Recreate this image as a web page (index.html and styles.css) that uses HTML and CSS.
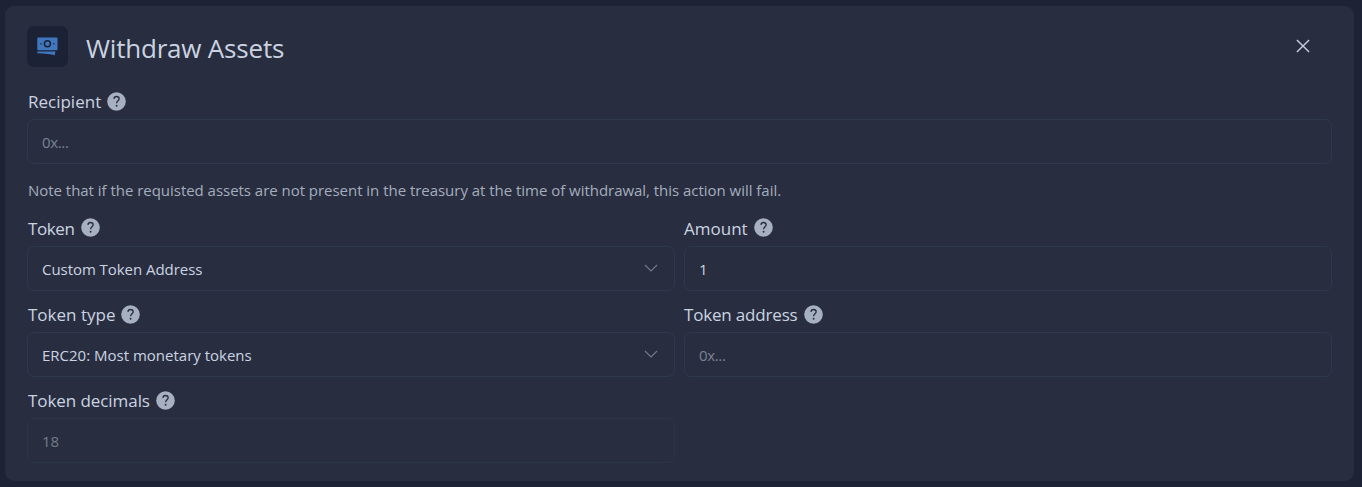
FILE: index.html
```html
<!DOCTYPE html>
<html lang="en">
<head>
<meta charset="utf-8">
<title>Withdraw Assets</title>
<link rel="stylesheet" href="styles.css">
</head>
<body>
<svg width="0" height="0" class="defs">
  <symbol id="help" viewBox="0 0 20 20"><circle cx="10" cy="10" r="9.8" fill="#a7b0c0"/><path d="M7.3 7.2C7.4 5.5 8.5 4.7 10 4.7c1.7 0 2.8 1 2.8 2.4 0 2-2.7 2.3-2.7 4.8" fill="none" stroke="#282e40" stroke-width="1.4"/><circle cx="10.1" cy="14.4" r="1" fill="#282e40"/></symbol>
  <symbol id="chevron" viewBox="0 0 14 8"><path d="M1 1l6 6 6-6" fill="none" stroke="#737a8b" stroke-width="1.1"/></symbol>
</svg>
<main class="card">
  <header class="header">
    <div class="badge">
      <svg width="21" height="19" viewBox="0 0 21 19"><rect x=".3" y=".4" width="20.2" height="12.8" rx="1" fill="#4077bf"/><circle cx="10.4" cy="6.8" r="3" fill="none" stroke="#1c2235" stroke-width="1.5"/><circle cx="4" cy="6.8" r=".8" fill="#1c2235"/><circle cx="16.8" cy="6.8" r=".8" fill="#1c2235"/><path d="M.3 14.5h18.1L17.8 18.2Q12 16.6.3 16.2z" fill="#4077bf"/></svg>
    </div>
    <h1 class="title">Withdraw Assets</h1>
    <button class="close" aria-label="Close"><svg width="14" height="14" viewBox="0 0 14 14"><path d="M.9.9l12.2 12.2M13.1.9L.9 13.1" stroke="#c6cfdd" stroke-width="1.4"/></svg></button>
  </header>
  <div class="label"><span>Recipient</span><svg class="help"><use href="#help"/></svg></div>
  <div class="field muted"><span class="hex">0x...</span></div>
  <p class="note">Note that if the requisted assets are not present in the treasury at the time of withdrawal, this action will fail.</p>
  <div class="grid">
    <section>
      <div class="label raised"><span class="token">Token</span><svg class="help"><use href="#help"/></svg></div>
      <div class="field"><span class="custom">Custom Token Address</span><svg class="chevron"><use href="#chevron"/></svg></div>
    </section>
    <section>
      <div class="label raised"><span>Amount</span><svg class="help"><use href="#help"/></svg></div>
      <div class="field"><span>1</span></div>
    </section>
    <section>
      <div class="label"><span>Token type</span><svg class="help"><use href="#help"/></svg></div>
      <div class="field"><span>ERC20: Most monetary tokens</span><svg class="chevron"><use href="#chevron"/></svg></div>
    </section>
    <section>
      <div class="label"><span class="address">Token address</span><svg class="help"><use href="#help"/></svg></div>
      <div class="field muted"><span class="hex">0x...</span></div>
    </section>
    <section>
      <div class="label"><span class="decimals">Token decimals</span><svg class="help"><use href="#help"/></svg></div>
      <div class="field muted disabled"><span>18</span></div>
    </section>
  </div>
</main>
</body>
</html>
```
FILE: styles.css
```css
* { box-sizing: border-box; }
body {
  margin: 0;
  height: 487px;
  overflow: hidden;
  padding: 6px 8px 6px 5px;
  background: #1d2335;
  font-family: "Open Sans", "Noto Sans", sans-serif;
  color: #cbd3e0;
}
.defs { display: none; }
.card {
  height: 475px;
  padding: 20px 22px 0;
  border-radius: 9px;
  background: #282e40;
}
.header { display: flex; align-items: center; height: 41px; }
.badge {
  display: flex;
  align-items: center;
  justify-content: center;
  width: 41px;
  height: 41px;
  border-radius: 7px;
  background: #1c2235;
}
.title {
  flex: 1;
  margin: 2px 0 0 18px;
  font-size: 26px;
  font-weight: 400;
  line-height: 36px;
  letter-spacing: -0.2px;
}
.close {
  display: flex;
  margin: 0 22.5px 1px 0;
  padding: 0;
  border: 0;
  background: none;
}
.label {
  display: flex;
  align-items: center;
  gap: 6px;
  height: 41px;
  padding: 6px 0 0 1px;
  font-size: 17px;
  line-height: 24px;
  white-space: nowrap;
}
.header + .label { height: 52px; padding-top: 17px; }
.grid section:nth-child(even) .label { padding-left: 0; }
.help { width: 19px; height: 19px; margin-bottom: 1px; }
.raised .help { margin-bottom: 2px; }
.token { letter-spacing: -0.4px; }
.address { letter-spacing: -0.18px; }
.decimals { letter-spacing: -0.07px; }
.field {
  display: flex;
  align-items: center;
  justify-content: space-between;
  height: 45px;
  padding: 0 16px 0 14px;
  border: 1px solid #2e394d;
  border-radius: 7px;
  font-size: 15px;
}
.muted { color: #7a8292; }
.hex { letter-spacing: -0.35px; }
.custom { letter-spacing: -0.05px; }
.disabled { color: #747c8a; border-color: #2a3545; }
.chevron { width: 14px; height: 8px; margin-bottom: 1px; }
.note {
  height: 41px;
  margin: 0;
  padding: 15px 0 0 1px;
  font-size: 15px;
  line-height: 22px;
  letter-spacing: -0.03px;
  color: #a5adbd;
  white-space: nowrap;
}
.grid { display: grid; grid-template-columns: 648px 648px; column-gap: 9px; }
```
